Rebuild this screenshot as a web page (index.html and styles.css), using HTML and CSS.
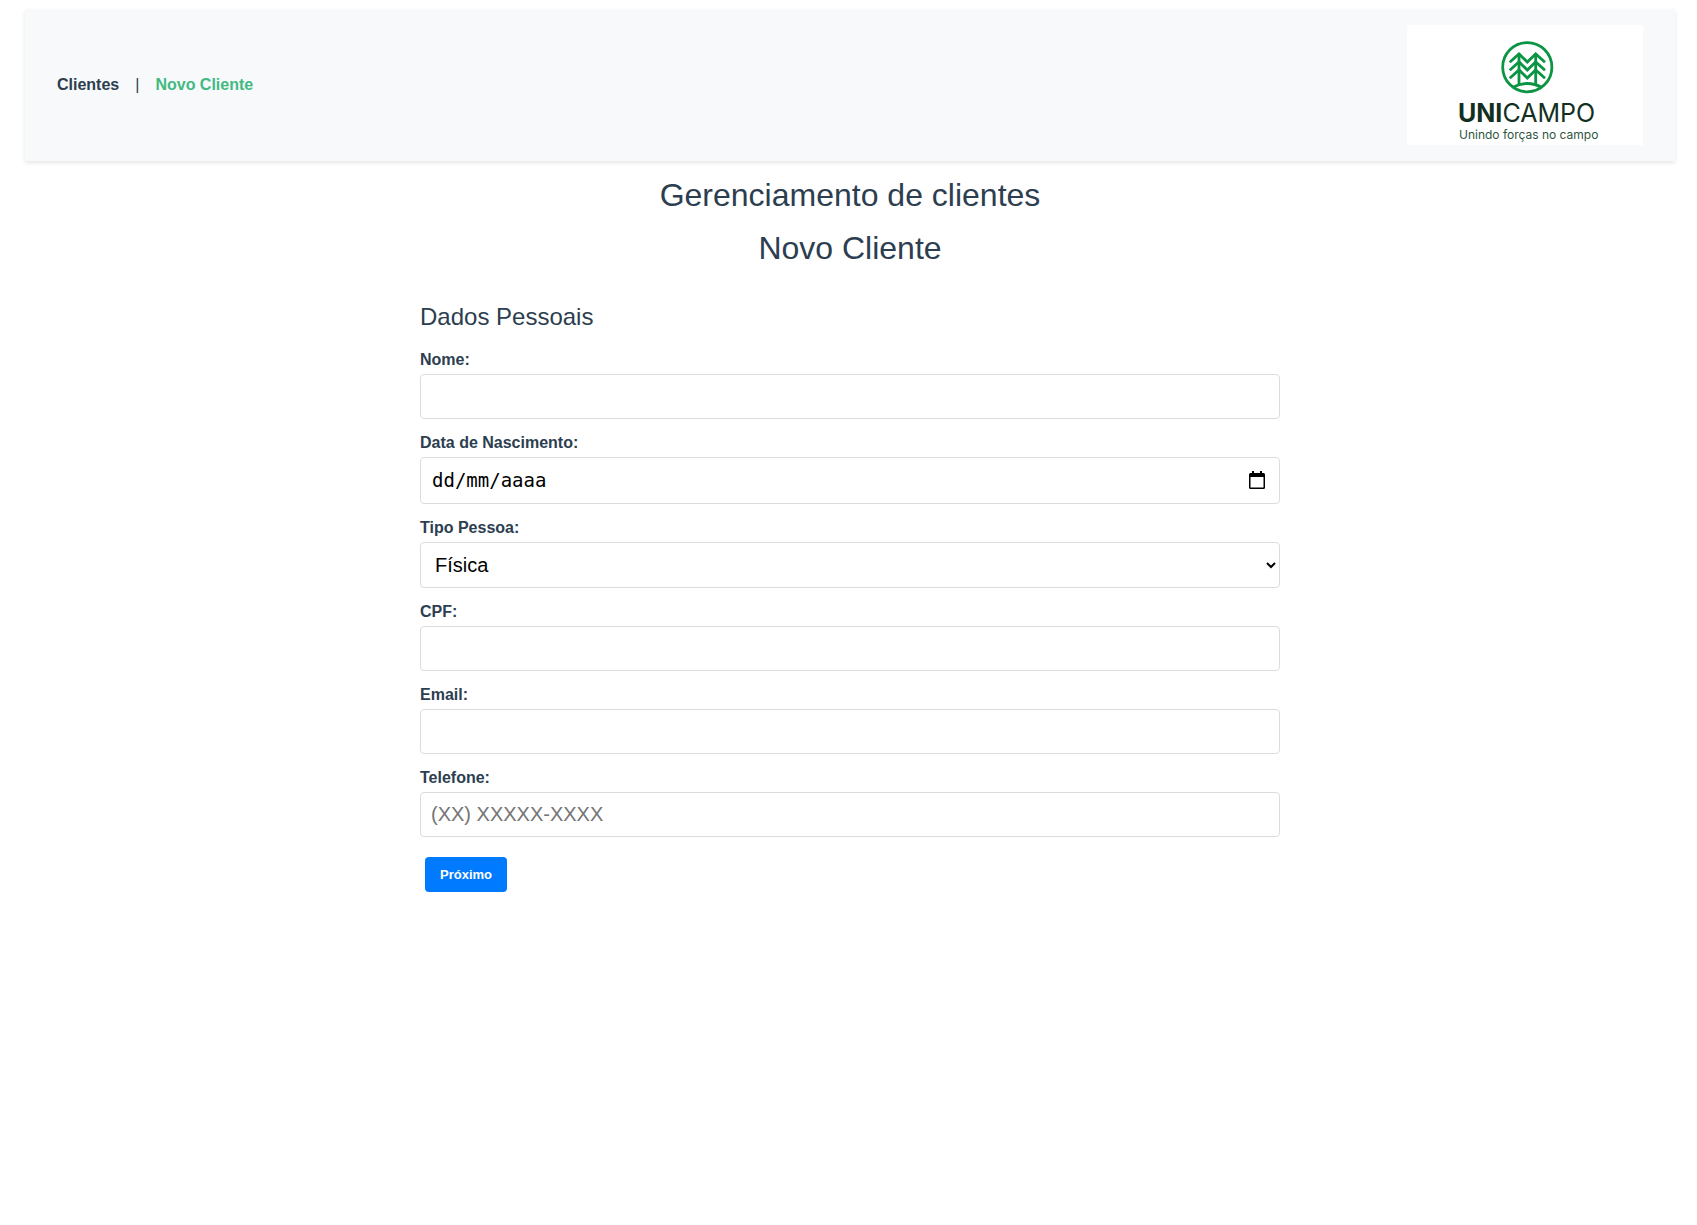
FILE: index.html
```html
<!DOCTYPE html>
<html lang="pt-BR">
<head>
  <meta charset="utf-8">
  <meta name="viewport" content="width=device-width, initial-scale=1">
  <title>Gerenciamento de clientes</title>
  <link rel="stylesheet" href="styles.css">
</head>
<body>
  <header class="topbar">
    <nav class="menu">
      <a class="menu-link" href="#clientes">Clientes</a>
      <span>|</span>
      <a class="menu-link active" href="#novo" aria-current="page">Novo Cliente</a>
    </nav>
    <svg class="logo" viewBox="0 0 236 120" role="img" aria-label="Unicampo">
      <g fill="none" stroke="#0b9444" stroke-width="2.8">
        <circle cx="120.3" cy="42.2" r="24.6"/>
        <path d="M112 28.5V59.5M128.700 28.5V59.500"/>
        <path d="M102.700 37.300L112 29L120.300 37L128.700 29L138 37.300"/>
        <path d="M102.700 45.300L112 37L120.300 45L128.700 37L138 45.300"/>
        <path d="M102.700 53.300L112 45L120.300 53L128.700 45L138 53.300"/>
        <path d="M105.500 62.500Q120.300 54.500 135 62.500"/>
      </g>
      <text class="logo-name" x="51" y="97"><tspan class="logo-strong">UNI</tspan>CAMPO</text>
      <text class="logo-tagline" x="52" y="114">Unindo forças no campo</text>
    </svg>
  </header>

  <main class="content">
    <h1 class="title">Gerenciamento de clientes</h1>
    <h2 class="title">Novo Cliente</h2>

    <form class="form">
      <h3 class="section">Dados Pessoais</h3>
      <div class="field">
        <label for="nome">Nome:</label>
        <input class="control" id="nome" type="text">
      </div>
      <div class="field">
        <label for="nascimento">Data de Nascimento:</label>
        <div class="control date">
          <input class="date-input" id="nascimento" type="text" placeholder="dd/mm/aaaa">
          <button class="date-button" type="button" aria-label="Abrir calendário">
            <svg width="16" height="18" viewBox="0 0 16 18">
              <path d="M3 0h2v2h6V0h2v2h1.500a1.500 1.500 0 0 1 1.500 1.500v13a1.500 1.500 0 0 1-1.500 1.500h-13A1.500 1.500 0 0 1 0 16.500v-13A1.500 1.500 0 0 1 1.500 2H3zM1.500 6v10.500h13V6z"/>
            </svg>
          </button>
        </div>
      </div>
      <div class="field">
        <label for="tipo">Tipo Pessoa:</label>
        <select class="control select" id="tipo">
          <option>Física</option>
          <option>Jurídica</option>
        </select>
      </div>
      <div class="field">
        <label for="cpf">CPF:</label>
        <input class="control" id="cpf" type="text">
      </div>
      <div class="field">
        <label for="email">Email:</label>
        <input class="control" id="email" type="email">
      </div>
      <div class="field">
        <label for="telefone">Telefone:</label>
        <input class="control" id="telefone" type="tel" placeholder="(XX) XXXXX-XXXX">
      </div>
      <button class="next" type="button">Próximo</button>
    </form>
  </main>
</body>
</html>
```
FILE: styles.css
```css
* {
  box-sizing: border-box;
}

body {
  margin: 0;
  padding: 9px 22px 0 25px;
  background: #fff;
  color: #2c3e50;
  font: 16px/20px "Liberation Sans", Arial, sans-serif;
}

.topbar {
  display: flex;
  align-items: center;
  justify-content: space-between;
  padding: 16px 32px;
  background: #f8f9fa;
  box-shadow: 0 2px 4px rgba(0, 0, 0, 0.1);
}

.menu {
  display: flex;
  gap: 16px;
}

.menu-link {
  color: #2c3e50;
  font-weight: bold;
  text-decoration: none;
}

.menu-link.active {
  color: #42b983;
}

.logo {
  width: 236px;
  height: 120px;
  background: #fff;
}

.logo-name {
  fill: #12301f;
  font: 25px Inter, sans-serif;
}

.logo-strong {
  font-weight: 700;
}

.logo-tagline {
  fill: #2f5541;
  font: 12px Inter, sans-serif;
}

.title {
  margin: 16px 0 0;
  font-size: 32px;
  font-weight: normal;
  line-height: 37px;
  text-align: center;
}

.form {
  max-width: 860px;
  margin: 36px auto 0;
}

.section {
  margin: 0 0 19px;
  font-size: 24px;
  font-weight: normal;
  line-height: 28px;
}

.field {
  display: flex;
  flex-direction: column;
  gap: 4px;
  margin-bottom: 14px;
}

.field label {
  font-weight: bold;
}

.control {
  width: 100%;
  height: 45px;
  padding: 10px;
  border: 1px solid #dcdcdc;
  border-radius: 4px;
  background: #fff;
  color: #000;
  font: 20px "Liberation Sans", Arial, sans-serif;
}

.control::placeholder {
  color: #757575;
}

.select {
  height: 46px;
  padding: 10px 0 10px 10px;
}

.date {
  display: flex;
  align-items: center;
  height: 47px;
  padding: 0 14px 1px 11px;
}

.date-input {
  flex: 1;
  min-width: 0;
  padding: 0;
  border: 0;
  outline: 0;
  background: none;
  font: 19px "DejaVu Sans Mono", monospace;
}

.date-input::placeholder {
  color: #000;
  opacity: 1;
}

.date-button {
  display: flex;
  padding: 0;
  border: 0;
  background: none;
}

.next {
  margin: 6px 5px;
  padding: 10px 15px;
  border: 0;
  border-radius: 4px;
  background: #007bff;
  color: #fff;
  font: bold 13px/15px "Liberation Sans", Arial, sans-serif;
}
```
